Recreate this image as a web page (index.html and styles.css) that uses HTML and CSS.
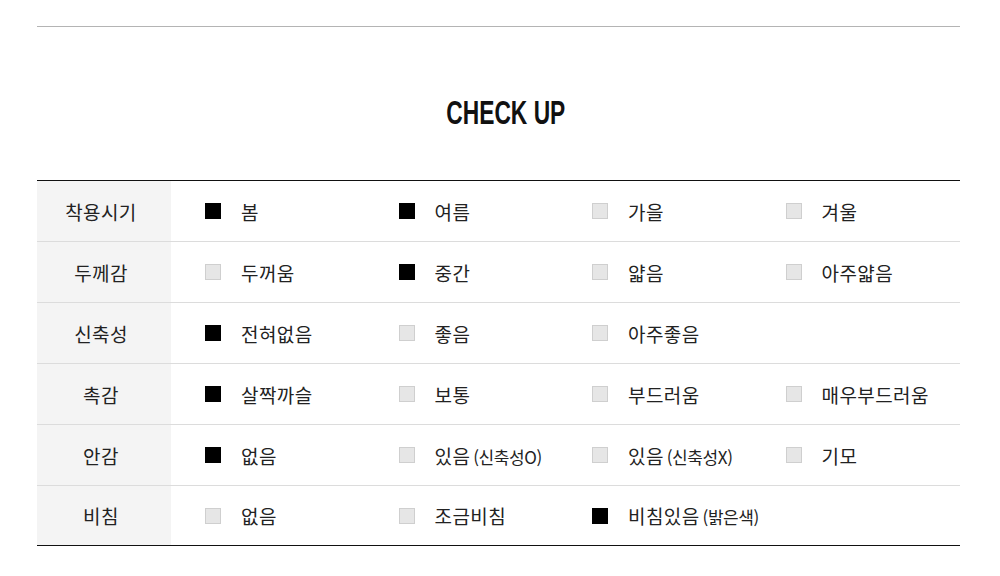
FILE: index.html
```html
<!DOCTYPE html>
<html lang="ko">
<head>
<meta charset="utf-8">
<title>CHECK UP</title>
<link rel="stylesheet" href="styles.css">
</head>
<body>
<div class="wrap">
  <hr class="topline">
  <h2 class="title"><span>CHECK UP</span></h2>
  <div class="table">
    <div class="row">
      <div class="label">착용시기</div>
      <div class="opts">
        <div class="opt"><i class="box on"></i><span>봄</span></div>
        <div class="opt"><i class="box on"></i><span>여름</span></div>
        <div class="opt"><i class="box"></i><span>가을</span></div>
        <div class="opt"><i class="box"></i><span>겨울</span></div>
      </div>
    </div>
    <div class="row">
      <div class="label">두께감</div>
      <div class="opts">
        <div class="opt"><i class="box"></i><span>두꺼움</span></div>
        <div class="opt"><i class="box on"></i><span>중간</span></div>
        <div class="opt"><i class="box"></i><span>얇음</span></div>
        <div class="opt"><i class="box"></i><span>아주얇음</span></div>
      </div>
    </div>
    <div class="row">
      <div class="label">신축성</div>
      <div class="opts">
        <div class="opt"><i class="box on"></i><span>전혀없음</span></div>
        <div class="opt"><i class="box"></i><span>좋음</span></div>
        <div class="opt"><i class="box"></i><span>아주좋음</span></div>
      </div>
    </div>
    <div class="row">
      <div class="label">촉감</div>
      <div class="opts">
        <div class="opt"><i class="box on"></i><span>살짝까슬</span></div>
        <div class="opt"><i class="box"></i><span>보통</span></div>
        <div class="opt"><i class="box"></i><span>부드러움</span></div>
        <div class="opt"><i class="box"></i><span>매우부드러움</span></div>
      </div>
    </div>
    <div class="row">
      <div class="label">안감</div>
      <div class="opts">
        <div class="opt"><i class="box on"></i><span>없음</span></div>
        <div class="opt"><i class="box"></i><span>있음<small>(신축성O)</small></span></div>
        <div class="opt"><i class="box"></i><span>있음<small>(신축성X)</small></span></div>
        <div class="opt"><i class="box"></i><span>기모</span></div>
      </div>
    </div>
    <div class="row">
      <div class="label">비침</div>
      <div class="opts">
        <div class="opt"><i class="box"></i><span>없음</span></div>
        <div class="opt"><i class="box"></i><span>조금비침</span></div>
        <div class="opt"><i class="box on"></i><span>비침있음<small>(밝은색)</small></span></div>
      </div>
    </div>
  </div>
</div>
</body>
</html>
```

FILE: styles.css
```css
html, body {
  margin: 0;
  padding: 0;
  background: #fff;
}
body {
  font-family: "Noto Sans CJK KR", "Noto Sans", sans-serif;
  color: #222;
}
.wrap {
  width: 923px;
  margin-left: 37px;
  padding-top: 26px;
}
.topline {
  margin: 0;
  border: 0;
  height: 1px;
  background: #b4b4b4;
}
.title {
  margin: 0;
  height: 153px;
  display: flex;
  align-items: center;
  justify-content: center;
  padding-left: 15px;
  box-sizing: border-box;
}
.title span {
  display: inline-block;
  font-family: "Liberation Sans", sans-serif;
  font-weight: bold;
  font-size: 34px;
  color: #111;
  transform: scaleX(0.67);
  margin-top: 17px;
}
.table {
  border-top: 1px solid #111;
  border-bottom: 1px solid #111;
}
.row {
  display: flex;
  height: 60px;
  border-bottom: 1px solid #dcdcdc;
}
.row:last-child {
  border-bottom: 0;
  height: 59px;
}
.label {
  width: 134px;
  flex: none;
  background: #f4f4f4;
  display: flex;
  align-items: center;
  justify-content: center;
  padding-right: 6px;
  box-sizing: border-box;
  font-size: 19px;
  letter-spacing: 0.4px;
  color: #222;
}
.opts {
  display: grid;
  grid-template-columns: repeat(4, 193.5px);
  padding-left: 34px;
  align-items: center;
}
.opt {
  display: flex;
  align-items: center;
  gap: 20px;
  font-size: 19px;
  color: #222;
}
.opt span {
  white-space: nowrap;
  letter-spacing: 0.4px;
}
.opt small {
  font-size: 17px;
  letter-spacing: -0.4px;
  margin-left: 3px;
}
.box {
  display: block;
  width: 16px;
  height: 16px;
  box-sizing: border-box;
  background: #e6e6e6;
  border: 1px solid #cfcfcf;
  flex: none;
}
.box.on {
  background: #000;
  border-color: #000;
}
```
